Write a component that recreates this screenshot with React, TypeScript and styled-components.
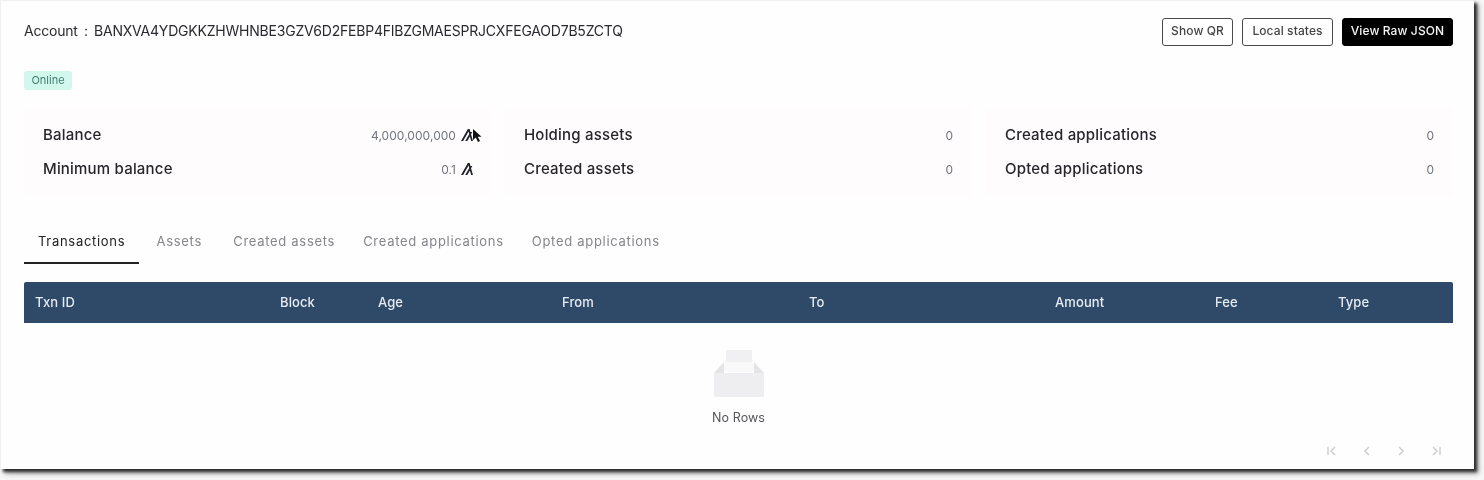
import React from "react";
import styled, { createGlobalStyle } from "styled-components";

const Global = createGlobalStyle`
  html, body { margin: 0; padding: 0; background: #fff; }
  body { font-family: "Inter", "Liberation Sans", sans-serif; overflow: hidden; }
`;

const Screen = styled.div`
  width: 1484px;
  height: 480px;
  background: #f7f7f7;
  overflow: hidden;
  filter: blur(0.45px);
`;

const Sheet = styled.main`
  width: 1474px;
  height: 469px;
  box-sizing: border-box;
  padding: 17px 21px 0 24px;
  background: #fffeff;
  border-top: 1px solid #f0f0f0;
  border-left: 1px solid #f0f0f0;
  box-shadow: 3px 3px 3px #2b2b2b, 5px 5px 5px #b5b5b5;
  display: flex;
  flex-direction: column;
`;

const Header = styled.header`
  display: flex;
  align-items: center;
  justify-content: space-between;
  height: 28px;
  margin-left: -1px;
`;

const AccountTitle = styled.h1`
  margin: 0 0 3px;
  font-size: 14px;
  line-height: 20px;
  font-weight: 400;
  color: #2a2a2e;
  letter-spacing: -0.21px;
  word-spacing: 2.5px;
  white-space: nowrap;
`;

const Actions = styled.div`
  display: flex;
  gap: 9px;
`;

const ActionButton = styled.button<{ $solid?: boolean; $width: number }>`
  width: ${(p) => p.$width}px;
  height: 28px;
  padding: 0 0 3px;
  border-radius: 3px;
  border: 1px solid ${(p) => (p.$solid ? "#000" : "#4a4a4a")};
  background: ${(p) => (p.$solid ? "#000" : "#fff")};
  color: ${(p) => (p.$solid ? "#f4f4f4" : "#444")};
  font-family: inherit;
  font-size: 12px;
  font-weight: 500;
  letter-spacing: 0.1px;
`;

const StatusBadge = styled.span`
  align-self: flex-start;
  margin-top: 25px;
  margin-left: -1px;
  width: 48px;
  height: 19px;
  line-height: 18px;
  text-align: center;
  border-radius: 3px;
  background: #d2f7ec;
  color: #3f7f71;
  font-size: 11px;
`;

const Stats = styled.section`
  display: grid;
  grid-template-columns: repeat(3, 467px);
  gap: 14px;
  margin-top: 17px;
  margin-left: -1px;
`;

const StatPanel = styled.div`
  height: 90px;
  box-sizing: border-box;
  padding: 17px 19px 0;
  background: #fefcfd;
  border-radius: 4px;
  display: flex;
  flex-direction: column;
  gap: 14px;
`;

const StatRow = styled.div`
  height: 20px;
  display: flex;
  align-items: center;
  justify-content: space-between;
`;

const StatLabel = styled.span`
  font-size: 15px;
  font-weight: 500;
  color: #26262a;
  letter-spacing: 0.2px;
`;

const StatValue = styled.span`
  display: flex;
  align-items: center;
  gap: 5px;
  font-size: 12px;
  letter-spacing: 0.05px;
  color: #70757e;
  margin-top: 2px;
  position: relative;
`;

const AlgoIcon = styled.svg`
  width: 12px;
  height: 12px;
  margin-right: -1px;
  fill: #20242c;
`;

const Pointer = styled.svg`
  position: absolute;
  right: -10px;
  top: 0;
  width: 10px;
  height: 15px;
`;

const Tabs = styled.nav`
  display: flex;
  margin-top: 23px;
  margin-left: -1px;
  height: 44px;
`;

const Tab = styled.div<{ $active?: boolean; $min?: number }>`
  box-sizing: border-box;
  min-width: ${(p) => p.$min ?? 0}px;
  padding: 0 14px;
  height: 44px;
  line-height: 42px;
  text-align: center;
  font-size: 13px;
  letter-spacing: 0.7px;
  color: ${(p) => (p.$active ? "#222" : "#85858a")};
  border-bottom: 2px solid ${(p) => (p.$active ? "#222" : "transparent")};
`;

const Table = styled.section`
  margin-top: 18px;
  margin-left: -1px;
  display: flex;
  flex-direction: column;
  flex: 1;
`;

const HeadRow = styled.div`
  height: 41px;
  box-sizing: border-box;
  padding-bottom: 2px;
  display: grid;
  grid-template-columns: 245px 98px 184px 247px 246px 160px 123px 1fr;
  align-items: center;
  padding-left: 11px;
  background: #2f4a68;
  border-radius: 2px 2px 0 0;
  color: #e6ebf1;
  font-size: 13px;
  font-weight: 500;
  letter-spacing: 0.1px;
`;

const EmptyState = styled.div`
  display: flex;
  flex-direction: column;
  align-items: center;
  padding-top: 27px;
  gap: 12px;
  height: 122px;
  box-sizing: border-box;
  color: #55555a;
  font-size: 12.5px;
  letter-spacing: 0.1px;
`;

const Pagination = styled.div`
  display: flex;
  justify-content: flex-end;
  gap: 22.67px;
  padding-right: 11px;
  color: #cfcfd2;
`;

const PageIcon = styled.svg`
  width: 12px;
  height: 12px;
  fill: none;
  stroke: currentColor;
  stroke-width: 1.5;
`;

const Algo = () => (
  <AlgoIcon viewBox="0 0 32 32">
    <path d="M32 32h-5l-3.24-12.06L16.79 32h-5.57l10.77-18.67-1.73-6.48L5.73 32H0L18.24 0h4.84l2.11 7.84h4.98l-3.4 5.91z" />
  </AlgoIcon>
);

const pageIcons = ["M2 2v8M9 2 5 6l4 4", "M8 2 4 6l4 4", "M4 2l4 4-4 4", "M3 2l4 4-4 4M10 2v8"];

const panels = [
  [
    { label: "Balance", value: "4,000,000,000", algo: true, pointer: true },
    { label: "Minimum balance", value: "0.1", algo: true },
  ],
  [
    { label: "Holding assets", value: "0" },
    { label: "Created assets", value: "0" },
  ],
  [
    { label: "Created applications", value: "0" },
    { label: "Opted applications", value: "0" },
  ],
];

const tabs = ["Transactions", "Assets", "Created assets", "Created applications", "Opted applications"];
const columns = ["Txn ID", "Block", "Age", "From", "To", "Amount", "Fee", "Type"];

export default function App() {
  return (
    <Screen>
      <Global />
      <Sheet>
        <Header>
          <AccountTitle>Account : BANXVA4YDGKKZHWHNBE3GZV6D2FEBP4FIBZGMAESPRJCXFEGAOD7B5ZCTQ</AccountTitle>
          <Actions>
            <ActionButton $width={71}>Show QR</ActionButton>
            <ActionButton $width={91}>Local states</ActionButton>
            <ActionButton $width={111} $solid>View Raw JSON</ActionButton>
          </Actions>
        </Header>
        <StatusBadge>Online</StatusBadge>
        <Stats>
          {panels.map((rows, i) => (
            <StatPanel key={i}>
              {rows.map((r) => (
                <StatRow key={r.label}>
                  <StatLabel>{r.label}</StatLabel>
                  <StatValue>
                    {r.value}
                    {r.algo && <Algo />}
                    {r.pointer && (
                      <Pointer viewBox="0 0 10 15">
                        <path d="M1 1v11l2.8-2.5L6 14l2-1-2.2-4.3H9.5z" fill="#111" />
                      </Pointer>
                    )}
                  </StatValue>
                </StatRow>
              ))}
            </StatPanel>
          ))}
        </Stats>
        <Tabs>
          {tabs.map((t, i) => (
            <Tab key={t} $active={i === 0} $min={i === 1 ? 80 : 0}>{t}</Tab>
          ))}
        </Tabs>
        <Table>
          <HeadRow>
            {columns.map((c) => (
              <span key={c}>{c}</span>
            ))}
          </HeadRow>
          <EmptyState>
            <svg width="54" height="48" viewBox="0 0 54 48">
              <path d="M14 0h26v18H14z" fill="#f0f0f2" />
              <path d="M14 12h26l11 10H3z" fill="#f9f9fa" />
              <path d="M2 23l10-11v11zM52 23 42 12v11z" fill="#e4e4e7" />
              <path d="M2 23h50v24H2z" fill="#eeeef0" />
            </svg>
            No Rows
          </EmptyState>
          <Pagination>
            {pageIcons.map((d) => (
              <PageIcon key={d} viewBox="0 0 12 12">
                <path d={d} />
              </PageIcon>
            ))}
          </Pagination>
        </Table>
      </Sheet>
    </Screen>
  );
}
